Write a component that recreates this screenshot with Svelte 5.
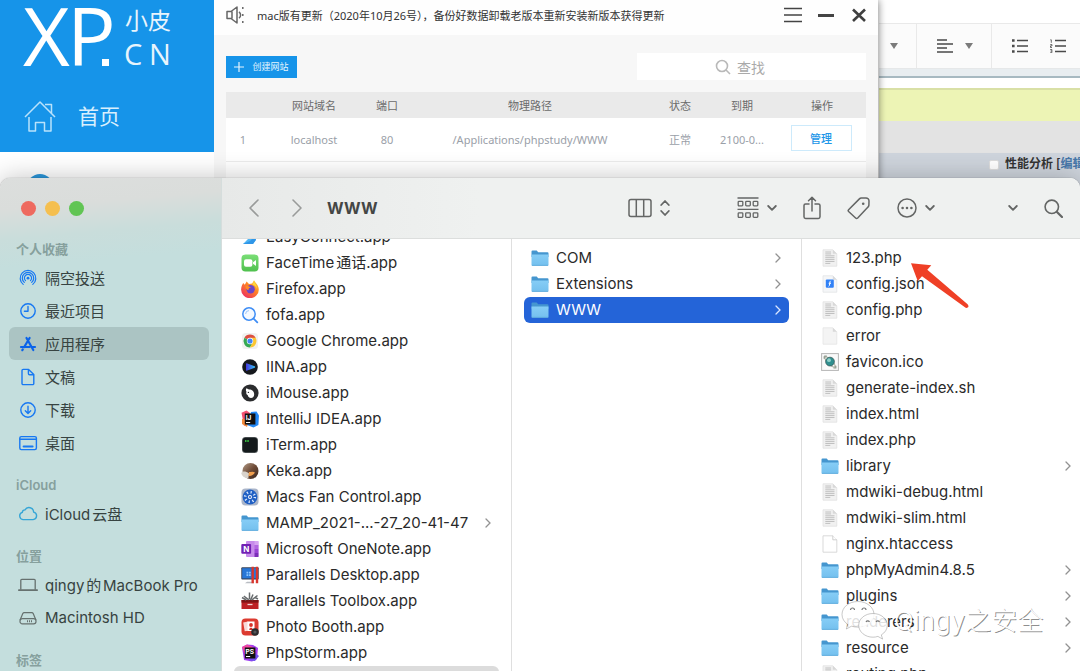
<script>
  const sites = [
    { id: '1', domain: 'localhost', port: '80', path: '/Applications/phpstudy/WWW', state: '正常', expires: '2100-0...' }
  ];

  const sidebar = [
    {
      title: '个人收藏',
      items: [
        { icon: 'airdrop', label: '隔空投送' },
        { icon: 'clock', label: '最近项目' },
        { icon: 'apps', label: '应用程序', active: true },
        { icon: 'doc', label: '文稿' },
        { icon: 'download', label: '下载' },
        { icon: 'desktop', label: '桌面' }
      ]
    },
    { title: 'iCloud', items: [{ icon: 'cloud', label: 'iCloud云盘' }] },
    {
      title: '位置',
      items: [
        { icon: 'laptop', label: 'qingy的MacBook Pro' },
        { icon: 'disk', label: 'Macintosh HD' }
      ]
    },
    { title: '标签', items: [] }
  ];

  const apps = [
    ['easy', 'EasyConnect.app'],
    ['facetime', 'FaceTime通话.app'],
    ['firefox', 'Firefox.app'],
    ['fofa', 'fofa.app'],
    ['chrome', 'Google Chrome.app'],
    ['iina', 'IINA.app'],
    ['imouse', 'iMouse.app'],
    ['idea', 'IntelliJ IDEA.app'],
    ['iterm', 'iTerm.app'],
    ['keka', 'Keka.app'],
    ['fan', 'Macs Fan Control.app'],
    ['folder', 'MAMP_2021-...-27_20-41-47'],
    ['onenote', 'Microsoft OneNote.app'],
    ['pdesktop', 'Parallels Desktop.app'],
    ['ptoolbox', 'Parallels Toolbox.app'],
    ['photobooth', 'Photo Booth.app'],
    ['phpstorm', 'PhpStorm.app'],
    ['folder', 'phpstudy', 'parent']
  ];

  const study = [
    ['folder', 'COM'],
    ['folder', 'Extensions'],
    ['folder', 'WWW', 'selected']
  ];

  const files = [
    ['text', '123.php'],
    ['json', 'config.json'],
    ['text', 'config.php'],
    ['blank', 'error'],
    ['ico', 'favicon.ico'],
    ['text', 'generate-index.sh'],
    ['text', 'index.html'],
    ['text', 'index.php'],
    ['folder', 'library'],
    ['text', 'mdwiki-debug.html'],
    ['text', 'mdwiki-slim.html'],
    ['white', 'nginx.htaccess'],
    ['folder', 'phpMyAdmin4.8.5'],
    ['folder', 'plugins'],
    ['folder', 'renderers'],
    ['folder', 'resource'],
    ['text', 'routing.php']
  ];

  const columns = [
    { rows: apps, scrolled: true },
    { rows: study, scrolled: false },
    { rows: files, scrolled: false }
  ];
</script>

{#snippet sideIcon(name)}
  <svg class="side-icon" viewBox="0 0 20 20" width="20" height="20" fill="none" stroke="#1778f2" stroke-width="1.4" stroke-linecap="round" stroke-linejoin="round" aria-hidden="true">
    {#if name === 'airdrop'}
      <g stroke-width="1.2">
        <path d="M5.2 16.4a7.8 7.8 0 1 1 9.6 0" />
        <path d="M6.3 14.4a5.7 5.7 0 1 1 7.4 0" />
        <path d="M7.5 12.6a3.6 3.6 0 1 1 5 0" />
        <circle cx="10" cy="10.2" r="1.4" fill="#1778f2" stroke="none" />
      </g>
    {:else if name === 'clock'}
      <circle cx="10" cy="10" r="7.2" /><path d="M10 5.4V10.3H6.4" />
    {:else if name === 'apps'}
      <g stroke="#0a63e9" stroke-width="2.2"><path d="M11.6 4 6.2 13M8.5 4l6.8 12M3 13h8.6M14 13h3M4.8 15.4l-.5.8" /></g>
    {:else if name === 'doc'}
      <path d="M5.2 2.4h5.4l5.2 5.2v8.8a1.2 1.2 0 0 1-1.2 1.2H5.2A1.2 1.2 0 0 1 4 16.4V3.6A1.2 1.2 0 0 1 5.2 2.4ZM10.4 2.6V6.6a1.2 1.2 0 0 0 1.2 1.2h4" />
    {:else if name === 'download'}
      <circle cx="10" cy="10" r="7.2" /><path d="M10 6.200v7M7.300 10.700 10 13.400l2.700-2.700" />
    {:else if name === 'desktop'}
      <rect x="1.8" y="3.600" width="16.600" height="13" rx="1.500" /><path d="M2 6.200h16" /><path d="M5.600 13.600h9" stroke-width="2" />
    {:else if name === 'cloud'}
      <path stroke="#35a5d6" d="M5 15.600a3.700 3.700 0 0 1-.7-7.200A2.700 2.700 0 0 1 7 5.900a4.600 4.600 0 0 1 8.600 2.200 3.800 3.800 0 0 1-.5 7.500Z" />
    {:else if name === 'laptop'}
      <g stroke="#66716f" stroke-width="1.300"><path d="M2.800 14.200V5.300a1 1 0 0 1 1-1h12.400a1 1 0 0 1 1 1v8.900" /><path d="M.8 15.200h18.400" stroke-width="1.700" /></g>
    {:else if name === 'disk'}
      <g stroke="#66716f" stroke-width="1.200"><path d="M2.200 11.700 4.800 5.600A1.600 1.600 0 0 1 6.200 4.700h7.600a1.600 1.600 0 0 1 1.400.9l2.600 6.100" /><rect x="2" y="10.600" width="16" height="5.300" rx="2.400" /><path d="M9 13.300h6" stroke-width="2" stroke-dasharray="1 1" stroke-linecap="butt" /></g>
    {/if}
  </svg>
{/snippet}

{#snippet fileIcon(name)}
  <svg class="file-icon" viewBox="0 0 18 18" width="18" height="18" aria-hidden="true">
    {#if name === 'folder'}
      <path d="M.5 2.600a1 1 0 0 1 1-1h4.200l1.500 1.600h9.300a1 1 0 0 1 1 1V8H.5Z" fill="#4596cf" />
      <path d="M.5 5.500h17v10.300a.9.900 0 0 1-.9.900H1.400a.9.900 0 0 1-.9-.9Z" fill="url(#folder)" />
      <path d="M.9 16.400h16.200" stroke="#5caadb" stroke-width=".8" />
    {:else if name === 'text'}
      <path d="M2 .8h9.800l4 4v12.400H2Z" fill="#f1f1f1" stroke="#e0e0e0" stroke-width=".7" />
      <path d="M11.800.8v4h4Z" fill="#d8d8d8" />
      <path d="M4.300 3h5.800M4.300 4.900h5.800M4.300 6.800h9.200M4.300 8.700h9.200M4.300 10.600h9.200M4.300 12.500h9.200M4.300 14.400h5" stroke="#c0c0c0" stroke-width="1" />
    {:else if name === 'json'}
      <path d="M2 .8h9.800l4 4v12.400H2Z" fill="#f5f6f8" stroke="#e0e1e4" stroke-width=".7" />
      <path d="M11.800.8v4h4Z" fill="#d7dadd" />
      <rect x="4.800" y="4.400" width="8" height="8.400" rx="1" fill="#3181f6" />
      <path d="M9.700 5.800c-1.300 0-.7 5.600-2 5.600M7.700 8.300h2.300" stroke="#fff" fill="none" />
    {:else if name === 'blank'}
      <path d="M2 .8h9.800l4 4v12.400H2Z" fill="#f4f4f4" stroke="#e3e3e3" stroke-width=".7" /><path d="M11.800.8v4h4Z" fill="#d9d9d9" />
    {:else if name === 'white'}
      <path d="M2 .8h9.800l4 4v12.400H2Z" fill="#fff" stroke="#cfcfcf" stroke-width=".8" /><path d="M11.800.8v4h4" fill="#fff" stroke="#c4c4c4" stroke-width=".8" />
    {:else if name === 'ico'}
      <rect x=".6" y=".6" width="16.800" height="16.800" fill="#fafafa" stroke="#b5b5b5" />
      <path d="M3.200 3.200h2.600M3.200 3.200v2.600M12.500 15h2.300v-2.300" stroke="#8d988c" stroke-width="1.200" fill="none" />
      <ellipse cx="9" cy="9" rx="7" ry="2.200" transform="rotate(45 9 9)" fill="none" stroke="#8a927f" stroke-width=".8" />
      <circle cx="9" cy="8.600" r="4.400" fill="#2f8f8f" stroke="#31504f" stroke-width=".7" /><circle cx="8" cy="7.200" r="1.900" fill="#8fd0c8" />
    {:else if name === 'easy'}
      <path d="M9 2h5l3 6-5 8H2l5-5Z" fill="#4fb4f3" /><path d="M2 16l7-3 5-5 1 4-3 4Z" fill="#2f96e8" />
    {:else if name === 'facetime'}
      <rect x=".5" y=".5" width="17" height="17" rx="4" fill="url(#green)" /><rect x="3" y="5.200" width="8.400" height="7.600" rx="2" fill="#fff" /><path d="m12 8.200 3-2.200v6l-3-2.200Z" fill="#fff" />
    {:else if name === 'firefox'}
      <path d="M1 5.200 2.200 3l1.600 1.800L5.600 1.500 8 4l3.200-.4L13 .2c.9 2.300 4.800 4.500 4.800 9.300A8.800 8.500 0 0 1 .1 9.800C.1 8 .5 6.400 1 5.200Z" fill="url(#fox)" />
      <circle cx="9.600" cy="9.200" r="4.200" fill="#6b45c9" /><path d="M4.500 6.200c2-.5 4 .2 5.500 1.400-1.800.2-2.700 1.200-2.500 2.600-1.800-.3-3-2-3-4Z" fill="#ff8b23" /><path d="M13 1c.5 2.500 3 4 3 8-.8-2-2-3.400-4.500-4.400Z" fill="#ffd93b" />
    {:else if name === 'fofa'}
      <circle cx="8" cy="8" r="6.200" fill="#f4f9ff" stroke="#3e8df5" stroke-width="1.500" /><path d="m12.600 12.600 3.700 3.700" stroke="#3e8df5" stroke-width="1.800" stroke-linecap="round" /><path d="M4.600 8A3.500 3.500 0 0 1 8 4.600" stroke="#9cc6fb" fill="none" />
    {:else if name === 'chrome'}
      <rect x="1" y="1" width="16" height="16" rx="3.500" fill="#f1f1f0" />
      <path d="M9 9 3.400 5.800A6.400 6.400 0 0 1 14.600 5.800Z" fill="#dc4e41" /><path d="M9 9 3.400 5.800A6.400 6.400 0 0 0 9 15.400l2.900-5Z" fill="#35a853" /><path d="M9 5.800h5.600A6.400 6.400 0 0 1 9 15.400L11.800 10Z" fill="#fbc632" />
      <circle cx="9" cy="9" r="3.200" fill="#fff" /><circle cx="9" cy="9" r="2.600" fill="#4285f4" />
    {:else if name === 'iina'}
      <circle cx="9" cy="9" r="7.800" fill="#15181d" /><path d="M5 5.800c.2-.5.800-.7 1.300-.4l7.400 2.900c.6.300.6 1.100 0 1.400l-7.400 2.900c-.5.300-1.100.1-1.300-.4Z" fill="url(#play)" />
    {:else if name === 'imouse'}
      <circle cx="9" cy="9" r="8.600" fill="#2b2c2e" /><path d="M5.500 4.200 8 5.600c2.800-.1 5.200 2 5.200 4.600 0 2.200-1.300 3.800-3.200 3.800-2 0-3-1.400-3.300-3C5.200 10.200 4.900 9 5.500 7.700c-.8-1-.8-2.500 0-3.500Z" fill="#fff" /><circle cx="7.400" cy="8.400" r=".7" fill="#2b2c2e" />
    {:else if name === 'idea'}
      <path d="m.5 2.800 5-2.300L9 3v8L3 16Z" fill="#f35071" /><path d="m1 9 8-1-3 9-5-3Z" fill="#f58b3c" /><path d="m10 2 5.500-.5 2.500 4-.6 9.500-5 2.500L6 15Z" fill="#2388f5" />
      <rect x="3.800" y="3.500" width="10.600" height="11" fill="#111" /><text x="4.800" y="9.600" font-family="Inter, sans-serif" font-weight="700" font-size="6.500" fill="#fff">IJ</text><path d="M5 12.500h4.200" stroke="#fff" />
    {:else if name === 'iterm'}
      <rect x="1" y="1" width="16" height="16" rx="3.500" fill="#555b5d" /><rect x="1.700" y="1.700" width="14.600" height="14.600" rx="3" fill="#141a1c" /><path d="M4 5h1.500M6.300 5h1.500" stroke="#35b83e" stroke-width="2" />
    {:else if name === 'keka'}
      <circle cx="9.500" cy="9" r="8" fill="url(#keka)" /><path d="M.2 11c2-2 4-2 8 .4l-1 5C3 16 .8 14 .2 11Z" fill="#d8d2cb" /><path d="M8 10c2 0 4-1 6 .5-1.500 2.500-4 4-6.500 3.500Z" fill="#f2a04e" />
    {:else if name === 'fan'}
      <rect x=".5" y=".5" width="17" height="17" rx="4" fill="#aab5c9" /><circle cx="9" cy="9" r="7.400" fill="#2060c4" />
      <circle cx="9" cy="9" r="4.800" fill="none" stroke="#dceaff" stroke-width="2.600" stroke-dasharray="1.200 2.570" /><circle cx="9" cy="9" r="2" fill="#f2f7ff" /><circle cx="9" cy="9" r="1" fill="#2858b3" />
    {:else if name === 'onenote'}
      <rect x="5" y="1" width="12.400" height="16" rx="1" fill="#c78bea" /><rect x="13.500" y="1" width="4" height="4" fill="#d5a4f1" /><rect x="13.500" y="5" width="4" height="4" fill="#b267e0" /><rect x="13.500" y="9" width="4" height="4" fill="#9a44d4" /><rect x="13.500" y="13" width="4" height="4" fill="#7c2db8" />
      <rect x=".3" y="4" width="9.800" height="9.800" rx="1" fill="#7220b4" /><text x="2.200" y="11.700" font-family="Inter, sans-serif" font-weight="700" font-size="8" fill="#fff">N</text>
    {:else if name === 'pdesktop'}
      <rect x=".3" y="1.300" width="17.400" height="12.200" rx="1" fill="#344158" /><rect x="1.200" y="2.200" width="15.600" height="10.200" fill="#2877d7" /><path d="M6 15.800h6l1 1.500H4Z" fill="#b8bcc2" /><path d="M5.500 5.800h1.800v1.800H5.500zM8 5.800h1.800v1.800H8zM5.500 8.200h1.800V10H5.500zM8 8.200h1.800V10H8z" fill="#8cc6ff" /><path d="M11.700.8v16.400M16 .8v16.400" stroke="#d8362e" stroke-width="2.400" />
    {:else if name === 'ptoolbox'}
      <path d="M.5 8h17v9H.5Z" fill="#bd2024" /><path d="M.5 8h17v2.600H.5Z" fill="#7f1416" /><path d="M1 5.500 5.300 8M2.800 4l5 3.800M8.500.5v7M12 2.500 9.600 8M16.500 3.500 11 7.800M14 5.500l3 1.500" stroke="#676b6d" stroke-width="1.500" /><path d="M6.500 12.500h5" stroke="#f0d6d6" stroke-width="1.300" />
    {:else if name === 'photobooth'}
      <rect x=".5" y=".5" width="17" height="17" rx="4" fill="#dc3b30" /><rect x="3" y="4" width="5" height="9" fill="#f8d9d7" transform="rotate(-10 5 9)" /><rect x="6.500" y="3.500" width="7" height="9.500" fill="#fff" /><circle cx="10" cy="7" r="1.900" fill="#d8332a" /><path d="M8.200 12q0-2.500 1.800-2.500t1.800 2.500Z" fill="#d8332a" /><circle cx="14" cy="14" r="3.800" fill="#2c2c2f" /><circle cx="14" cy="14" r="1.600" fill="#55565a" />
    {:else if name === 'phpstorm'}
      <path d="m1 3 5-2.500L12 1l5 3-1 11-5 2.500L3 16Z" fill="#a33df0" /><path d="M1 3 6 .5 12 3 4 11Z" fill="#f0469f" /><path d="m13 8 5 4-4 5-6-.5Z" fill="#7451ee" /><rect x="3.800" y="3.500" width="10.600" height="11" fill="#111" />
      <text x="4.600" y="9.800" font-family="Inter, sans-serif" font-weight="700" font-size="6.500" fill="#fff">PS</text><path d="M5 12.500h4.200" stroke="#fff" />
    {/if}
  </svg>
{/snippet}

{#snippet chevron()}
  <svg viewBox="0 0 10 8" width="10" height="8" fill="none" stroke="#646665" stroke-width="1.800" stroke-linecap="round" stroke-linejoin="round" aria-hidden="true"><path d="m1.200 2 3.800 3.900L8.800 2" /></svg>
{/snippet}

<svg class="defs" width="0" height="0" aria-hidden="true">
  <defs>
    <linearGradient id="folder" x1="0" y1="0" x2="0" y2="1"><stop offset="0" stop-color="#86cdf6" /><stop offset="1" stop-color="#74c0ee" /></linearGradient>
    <linearGradient id="green" x1="0" y1="0" x2="0" y2="1"><stop offset="0" stop-color="#7ade76" /><stop offset="1" stop-color="#4fc04e" /></linearGradient>
    <linearGradient id="fox" x1="1" y1="0" x2=".2" y2="1"><stop offset="0" stop-color="#ffe03a" /><stop offset=".45" stop-color="#ff8426" /><stop offset="1" stop-color="#ec2c63" /></linearGradient>
    <linearGradient id="play"><stop offset="0" stop-color="#4536e0" /><stop offset="1" stop-color="#35c4f5" /></linearGradient>
    <linearGradient id="keka" x1="0" y1="0" x2="1" y2="1"><stop offset="0" stop-color="#b39c88" /><stop offset=".5" stop-color="#6d4a36" /><stop offset="1" stop-color="#38261f" /></linearGradient>
  </defs>
</svg>

<div class="screen">
  <section class="browser" aria-label="phpMyAdmin">
    <div class="address"></div>
    <div class="editor-bar">
      <button class="cell first" aria-label="样式"><i class="caret"></i></button>
      <button class="cell align" aria-label="对齐">
        <svg viewBox="0 0 16 14" width="16" height="14" stroke="#4a4a4a" stroke-width="1.700" aria-hidden="true"><path d="M0 1h10M0 5h16M0 9h10M0 13h16" /></svg>
        <i class="caret"></i>
      </button>
      <button class="cell plain" aria-label="项目列表">
        <svg viewBox="0 0 16 14" width="16" height="14" stroke="#4a4a4a" stroke-width="1.700" aria-hidden="true"><path d="M5 1.500h11M5 7h11M5 12.500h11" /><path d="M0 1.500h2.600M0 7h2.600M0 12.500h2.600" stroke-width="2.400" /></svg>
      </button>
      <button class="cell plain" aria-label="编号列表">
        <svg viewBox="0 0 16 14" width="16" height="14" stroke="#4a4a4a" stroke-width="1.700" fill="none" aria-hidden="true"><path d="M5 1.500h11M5 7h11M5 12.500h11" /><path d="M.3.800h1v3M.2 5.600h1.800v1.300H.5v1.600H2M.2 10.500h1.700v3.200H.2M.5 12h1.400" stroke-width=".8" /></svg>
      </button>
    </div>
    <div class="strip"></div>
    <div class="notice"></div>
    <div class="panel"></div>
    <div class="profiling">
      <input type="checkbox" id="profiling" />
      <label for="profiling">性能分析</label>
      <span>[<a href="#edit">编辑</a>]</span>
    </div>
  </section>

  <section class="study" aria-label="小皮">
    <aside class="brand">
      <div class="blue">
        <svg class="logo" viewBox="0 0 160 70" width="160" height="70" fill="#fff" role="img" aria-label="XP 小皮 CN">
          <g font-family="'Open Sans', sans-serif" font-size="81" font-weight="500"><text x="-1" y="66">X</text><text x="43" y="66">P</text></g>
          <rect x="78" y="59" width="7" height="7" />
          <text x="101" y="29" font-family="'Noto Sans CJK SC', sans-serif" font-size="23" opacity=".9">小皮</text>
          <text x="100 125" y="65" font-family="'Open Sans', sans-serif" font-size="29" opacity=".9">CN</text>
        </svg>
        <a class="home" href="#home">
          <svg viewBox="0 0 32 32" width="32" height="32" fill="none" stroke="#b9e2fb" stroke-width="1.500" stroke-linejoin="round" aria-hidden="true"><path d="M1 17 16 2l15 15M21 4.500h6.500V13M5 17v14h6.500v-8.500h9V31H27V17" /></svg>
          <span>首页</span>
        </a>
      </div>
      <div class="below"><i></i></div>
    </aside>
    <div class="main">
      <header>
        <svg viewBox="0 0 20 18" width="20" height="18" fill="none" stroke="#666" stroke-width="1.500" stroke-linejoin="round" aria-hidden="true"><path d="M1 5.500h4L11 1v16l-6-4.500H1ZM6 5.500v7" /><path d="M13 5.800a4 4 0 0 1 0 6.400" /><path d="M16.800 1v2M16.800 8v2M16.800 15v2" /></svg>
        <p>mac版有更新（2020年10月26号），备份好数据卸载老版本重新安装新版本获得更新</p>
        <button aria-label="菜单"><svg viewBox="0 0 18 16" width="18" height="16" stroke="#444" stroke-width="1.500" aria-hidden="true"><path d="M0 1.500h18M0 8h18M0 14.500h18" /></svg></button>
        <button aria-label="最小化"><svg viewBox="0 0 18 16" width="18" height="16" stroke="#444" stroke-width="3" aria-hidden="true"><path d="M1 8.500h16" /></svg></button>
        <button aria-label="关闭"><svg viewBox="0 0 14 16" width="14" height="16" stroke="#3f3f3f" stroke-width="2.600" aria-hidden="true"><path d="m1 2.500 12 11.500M13 2.500 1 14" /></svg></button>
      </header>
      <div class="tools">
        <button class="create"><svg viewBox="0 0 10 10" width="10" height="10" stroke="#e5f4fe" stroke-width="1.200" aria-hidden="true"><path d="M5 0v10M0 5h10" /></svg>创建网站</button>
        <label class="search">
          <svg viewBox="0 0 16 16" width="16" height="16" fill="none" stroke="#b9b9b9" stroke-width="1.600" aria-hidden="true"><circle cx="7" cy="7" r="5.500" /><path d="m11 11 4 4" /></svg>
          <input type="search" placeholder="查找" aria-label="查找" />
        </label>
      </div>
      <table>
        <colgroup><col style="width:34px" /><col style="width:108px" /><col style="width:38px" /><col /><col style="width:52px" /><col style="width:72px" /><col style="width:88px" /></colgroup>
        <thead><tr><th></th><th>网站域名</th><th>端口</th><th>物理路径</th><th>状态</th><th>到期</th><th>操作</th></tr></thead>
        <tbody>
          {#each sites as s}
            <tr><td>{s.id}</td><td>{s.domain}</td><td>{s.port}</td><td>{s.path}</td><td>{s.state}</td><td>{s.expires}</td><td class="action"><button>管理</button></td></tr>
          {/each}
          <tr class="empty"><td colspan="7"></td></tr>
        </tbody>
      </table>
    </div>
  </section>

  <section class="finder" aria-label="访达">
    <nav class="sidebar">
      <div class="lights"><button aria-label="关闭"></button><button aria-label="最小化"></button><button aria-label="缩放"></button></div>
      {#each sidebar as group}
        <section>
          <h2>{group.title}</h2>
          {#each group.items as item}
            <a href="#{item.icon}" class:active={item.active}>{@render sideIcon(item.icon)}<span>{item.label}</span></a>
          {/each}
        </section>
      {/each}
    </nav>

    <div class="content">
      <header class="toolbar">
        <button aria-label="后退"><svg viewBox="0 0 12 20" width="12" height="20" fill="none" stroke="#999b9a" stroke-width="1.600" stroke-linecap="round" stroke-linejoin="round" aria-hidden="true"><path d="M10 2 2 10l8 8" /></svg></button>
        <button class="forward" aria-label="前进"><svg viewBox="0 0 12 20" width="12" height="20" fill="none" stroke="#999b9a" stroke-width="1.600" stroke-linecap="round" stroke-linejoin="round" aria-hidden="true"><path d="m2 2 8 8-8 8" /></svg></button>
        <h1>WWW</h1>
        <div class="actions">
          <button class="view" aria-label="显示">
            <svg viewBox="0 0 24 20" width="24" height="20" fill="none" stroke="#646665" stroke-width="1.500" aria-hidden="true"><rect x="1" y="1.500" width="22" height="17" rx="2" /><path d="M8.300 2v16M15.700 2v16" /></svg>
            <svg viewBox="0 0 10 18" width="10" height="18" fill="none" stroke="#646665" stroke-width="1.800" stroke-linecap="round" stroke-linejoin="round" aria-hidden="true"><path d="m1.200 6 3.800-4 3.800 4M1.200 12 5 16l3.800-4" /></svg>
          </button>
          <button aria-label="编组">
            <svg viewBox="0 0 22 22" width="22" height="22" fill="none" stroke="#646665" stroke-width="1.300" aria-hidden="true"><path d="M.5 1h21M.5 12.400h21" /><rect x="1.200" y="4.300" width="4.600" height="4.600" rx=".8" /><rect x="8.700" y="4.300" width="4.600" height="4.600" rx=".8" /><rect x="16.200" y="4.300" width="4.600" height="4.600" rx=".8" /><rect x="1.200" y="15.800" width="4.600" height="4.600" rx=".8" /><rect x="8.700" y="15.800" width="4.600" height="4.600" rx=".8" /><rect x="16.200" y="15.800" width="4.600" height="4.600" rx=".8" /></svg>
            {@render chevron()}
          </button>
          <button aria-label="共享"><svg viewBox="0 0 18 24" width="18" height="24" fill="none" stroke="#646665" stroke-width="1.500" stroke-linecap="round" stroke-linejoin="round" aria-hidden="true"><path d="M6 8H2.600A1.600 1.600 0 0 0 1 9.600v11.200a1.600 1.600 0 0 0 1.600 1.600h12.800a1.600 1.600 0 0 0 1.600-1.600V9.600A1.600 1.600 0 0 0 15.400 8H12M9 15V1.500M5.500 4.800 9 1.300l3.500 3.500" /></svg></button>
          <button aria-label="标签"><svg viewBox="0 0 24 24" width="24" height="24" fill="none" stroke="#646665" stroke-width="1.500" stroke-linejoin="round" aria-hidden="true"><path d="M1.600 13.700 12.400 2.900a3 3 0 0 1 1.900-.9l4.600-.1a3 3 0 0 1 3.100 3.100l-.1 4.100a3 3 0 0 1-.9 2L10.700 22a1.500 1.500 0 0 1-2.100 0l-7-6.500a1.300 1.300 0 0 1 0-1.800Z" /><circle cx="16.200" cy="7.700" r="1.300" fill="#646665" stroke="none" /></svg></button>
          <button class="more" aria-label="更多">
            <svg viewBox="0 0 20 20" width="20" height="20" fill="none" stroke="#646665" stroke-width="1.500" aria-hidden="true"><circle cx="10" cy="10" r="9" /><path d="M5.600 10h.01M10 10h.01M14.400 10h.01" stroke-width="2.600" stroke-linecap="round" /></svg>
            {@render chevron()}
          </button>
          <button aria-label="展开">{@render chevron()}</button>
          <button aria-label="搜索"><svg viewBox="0 0 19 19" width="19" height="19" fill="none" stroke="#646665" stroke-width="1.600" stroke-linecap="round" aria-hidden="true"><circle cx="7.800" cy="7.800" r="6.700" /><path d="m13 13 5 5" stroke-width="2.200" /></svg></button>
        </div>
      </header>
      <div class="columns">
        {#each columns as col}
          <div class="column">
            <ul class:scrolled={col.scrolled}>
              {#each col.rows as [icon, name, state]}
                <li>
                  <button class={['row', state]}>
                    {@render fileIcon(icon)}
                    <span>{name}</span>
                    {#if icon === 'folder'}
                      <svg class="go" viewBox="0 0 6 10" width="6" height="10" fill="none" stroke="currentColor" stroke-width="1.300" stroke-linecap="round" aria-hidden="true"><path d="m1 1 4 4-4 4" /></svg>
                    {/if}
                  </button>
                </li>
              {/each}
            </ul>
          </div>
        {/each}
      </div>
    </div>
  </section>

  <svg class="arrow" viewBox="0 0 60 48" width="60" height="48" aria-hidden="true"><path d="M1 1.300 21.300 3.300 17.300 7.800 57.600 42.300q2 2.500-.5 3.500-1 .4-2.500-.8L12 14.200 7.700 19Z" fill="#ef4026" /></svg>

  <div class="watermark">
    <svg viewBox="0 0 50 42" width="50" height="42" aria-hidden="true">
      <g fill="#fff" fill-opacity=".86" stroke="#8b8b8b" stroke-opacity=".6" stroke-width=".8">
        <path d="M18 1.500C8.600 1.500 2 7.400 2 14.500c0 4 2.200 7.500 5.700 9.900L6.300 29l5.200-2.800c2 .6 4.200.9 6.500.9 9 0 16-5.600 16-12.600S27 1.500 18 1.500Z" />
        <path d="M33 13.500c-8 0-14.300 5.300-14.300 11.800S25 37.200 33 37.200c1.700 0 3.400-.3 4.900-.8l4.700 2.700-1.300-4.200c3.700-2.200 6-5.700 6-9.600 0-6.500-6.300-11.800-14.300-11.800Z" />
      </g>
      <g fill="none" stroke="#777" stroke-width="1.200"><path d="M10.500 10a2 2 0 0 1 4 0M22 10a2 2 0 0 1 4 0M26 22a2 2 0 0 1 3.500 0M36 22a2 2 0 0 1 3.500 0" /></g>
    </svg>
    <span>Qingy之安全</span>
  </div>
</div>

<style>
  :global(body) { margin: 0; overflow: hidden; }
  * { box-sizing: border-box; }
  button { border: 0; background: none; padding: 0; font: inherit; color: inherit; text-align: inherit; }
  a { color: inherit; text-decoration: none; }
  svg { display: block; flex: none; }
  .defs { position: absolute; }
  .screen { position: relative; height: 100vh; overflow: hidden; background: #fff; font-family: Inter, "Noto Sans CJK SC", sans-serif; }

  /* web page at the back */
  .browser { position: absolute; top: 0; left: 879px; right: 0; }
  .address { height: 23px; background: #fff; }
  .editor-bar { display: flex; height: 46px; background: #fbfbfb; border-top: 1px solid #e9e9e9; border-bottom: 1px solid #e6e8e9; overflow: hidden; }
  .cell { display: flex; align-items: center; flex: none; }
  .cell.first { width: 38px; padding-left: 11px; border-right: 1px solid #e9e9e9; }
  .cell.align { width: 75px; gap: 12px; padding-left: 20px; border-right: 1px solid #e9e9e9; }
  .cell.plain { padding-left: 20px; }
  .cell.plain + .cell.plain { padding-left: 22px; }
  .caret { border: 4px solid transparent; border-top: 6px solid #7b7b7b; border-bottom: 0; }
  .strip { height: 9px; background: #e8edf0; border-bottom: 2px solid #a7b9c1; }
  .notice { height: 33px; margin-top: 10px; background: #edf4b5; border-top: 2px solid #d9e0a6; }
  .panel { height: 32px; background: #e3e3e3; }
  .profiling { display: flex; align-items: center; height: 40px; padding: 0 0 20px 110px; background: #ced4dc; font: 600 12px/20px "Noto Sans CJK SC", sans-serif; color: #333; white-space: nowrap; }
  .profiling input { appearance: none; flex: none; width: 10px; height: 10px; margin: 4px 6px 0 0; background: #fff; border: 1px solid #ddd; border-radius: 2px; }
  .profiling label { margin-right: 3px; }
  .profiling a { color: #4677a9; }

  /* phpstudy window */
  .study { position: absolute; top: 0; left: 0; width: 878px; height: 240px; display: flex; background: #f7f7f7; box-shadow: 0 0 8px rgba(0, 0, 0, .55); font-family: "Noto Sans", "Noto Sans CJK SC", sans-serif; }
  .brand { width: 214px; flex: none; background: #fff; }
  .blue { display: flow-root; height: 152px; background: #1694e9; }
  .logo { margin-left: 24px; overflow: visible; }
  .home { display: flex; align-items: center; gap: 22px; margin: 30px 0 0 24px; color: #d9effd; font-size: 21px; line-height: 32px; }
  .below { padding: 22px 27px; }
  .below i { display: block; width: 26px; height: 26px; border-radius: 50%; background: #2b96da; }
  .main { flex: 1; min-width: 0; }
  .main header { display: flex; align-items: center; height: 35px; padding: 0 12px 6px 12px; background: #fefefe; }
  .main header p { flex: 1; margin: 0 0 0 11px; font-size: 11px; color: #333; white-space: nowrap; }
  .main header button { margin-left: 15px; }
  .main header button:last-child { margin-left: 17px; }
  .tools { display: flex; align-items: center; justify-content: space-between; padding: 18px 12px 12px; }
  .create { display: flex; align-items: center; justify-content: center; gap: 8px; width: 71px; height: 22px; background: #1694e9; color: #e5f4fe; font-size: 9px; }
  .search { display: flex; align-items: center; gap: 6px; width: 229px; height: 27px; padding-left: 78px; background: #fff; }
  .search input { flex: 1; min-width: 0; border: 0; padding: 0; background: none; font: 14px/20px "Noto Sans CJK SC", sans-serif; outline: 0; }
  .search input::placeholder { color: #aaa; }
  table { width: calc(100% - 24px); margin: 0 12px; border-collapse: collapse; table-layout: fixed; background: #fff; font-size: 11px; text-align: center; }
  th { height: 26px; padding: 0; background: #eaeaea; font-weight: 400; color: #6b6b6b; }
  td { height: 43px; padding: 0; color: #9aa0a8; border-bottom: 1px solid #ececec; }
  td.action { padding: 0 2px 2px 0; }
  td button { width: 61px; height: 26px; border: 1px solid #cdeafb; background: #fff; color: #2196e8; font-weight: 500; text-align: center; }

  /* finder window */
  .finder { position: absolute; top: 178px; left: 0; right: 0; bottom: 0; display: flex; border-radius: 10px 10px 0 0; box-shadow: 0 0 1px rgba(0, 0, 0, .5), 0 0 26px rgba(0, 0, 0, .24); }
  .sidebar { width: 222px; flex: none; overflow: hidden; border-radius: 10px 0 0 0; border-right: 1px solid #d5dddc; background: linear-gradient(175deg, #dcdedd 0, #dadddb 32px, #c9dddb 62px, #c4dedd 90px); }
  .lights { display: flex; align-items: center; gap: 9px; height: 60px; padding-left: 21px; }
  .lights button { width: 15px; height: 15px; border-radius: 50%; background: #ee6a5f; }
  .lights button:nth-child(2) { background: #f5bf4f; }
  .lights button:nth-child(3) { background: #61c554; }
  .sidebar section { margin-bottom: 15px; }
  .sidebar h2 { margin: 0; padding-left: 16px; font-size: 13px; line-height: 23px; font-weight: 600; color: #86a09d; }
  .sidebar a { display: flex; align-items: center; gap: 7px; height: 33px; margin: 0 12px 0 9px; padding-left: 9px; border-radius: 6px; font-size: 15px; color: #374341; white-space: nowrap; text-autospace: normal; }
  .sidebar a.active { background: #abc4c3; }
  .content { display: flex; flex-direction: column; flex: 1; min-width: 0; overflow: hidden; border-radius: 0 10px 0 0; background: #fff; }
  .toolbar { display: flex; align-items: center; flex: none; height: 61px; padding: 0 17px 0 26px; border-bottom: 1px solid #dcdedd; background: linear-gradient(90deg, #e7e9e8, #eff1f0 30%); }
  .forward { margin-left: 31px; }
  h1 { margin: 0 0 0 24px; font-size: 16px; line-height: 24px; font-weight: 700; color: #444645; }
  .actions { display: flex; align-items: center; gap: 26px; margin-left: auto; }
  .actions button { display: flex; align-items: center; gap: 8px; }
  .actions .view { margin-right: 41px; }
  .actions .more { margin-right: 47px; }
  .columns { display: flex; flex: 1; min-height: 0; overflow: hidden; }
  .column { flex: none; width: 290px; overflow: hidden; border-right: 1px solid #dfdfdf; }
  ul { list-style: none; margin: 0; padding: 6px 12px; }
  ul.scrolled { margin-top: -21px; }
  .row { display: flex; align-items: center; gap: 7px; width: 100%; height: 26px; padding: 0 8px 0 7px; border-radius: 6px; font-size: 15px; line-height: 26px; color: #2a2a2a; white-space: nowrap; text-autospace: normal; }
  .row.selected { background: #2464d8; color: #fff; }
  .row.parent { background: #dcdcdc; }
  .go { margin-left: auto; color: #929292; }
  .selected .go { color: #dbe7ff; }

  /* annotations over the windows */
  .arrow { position: absolute; top: 262px; left: 910px; }
  .watermark { position: absolute; top: 600px; left: 840px; display: flex; align-items: center; gap: 4px; font-family: Inter, "Noto Sans CJK SC", sans-serif; font-weight: 300; font-size: 26px; line-height: 42px; color: #fff; text-shadow: 1px 1px 0 rgba(0, 0, 0, .45); white-space: nowrap; }
</style>
